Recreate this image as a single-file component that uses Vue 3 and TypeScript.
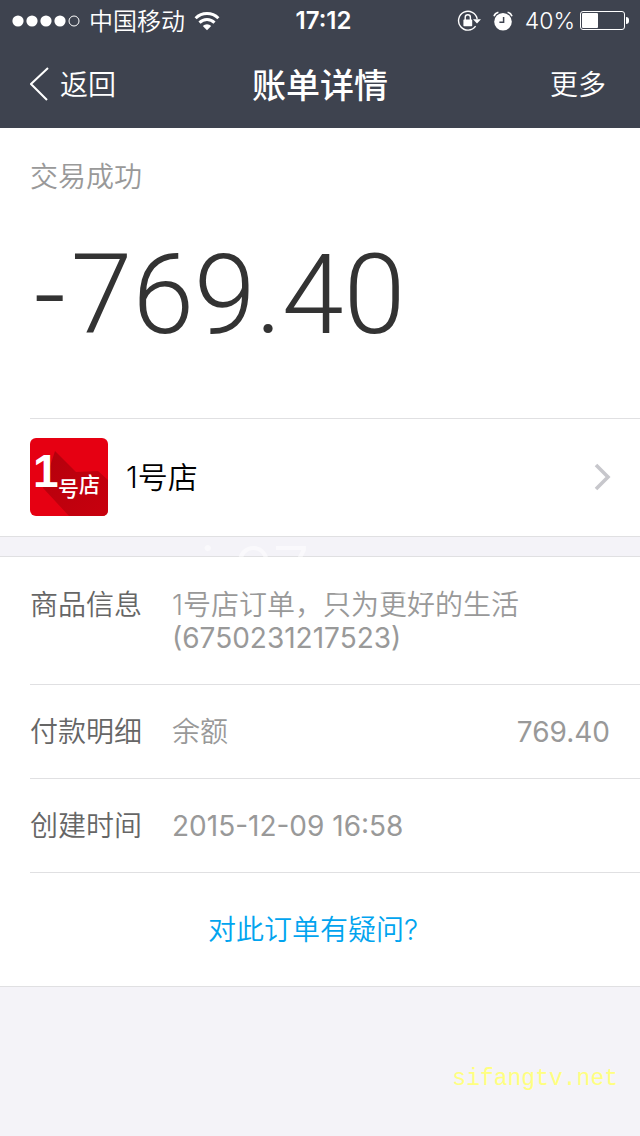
<script setup lang="ts">
interface Line {
  text: string
  numeric?: boolean
}

interface Detail {
  label: string
  lines: Line[]
  amount?: string
}

const batteryLevel = 40

const details: Detail[] = [
  {
    label: '商品信息',
    lines: [{ text: '1号店订单，只为更好的生活' }, { text: '(6750231217523)', numeric: true }],
  },
  { label: '付款明细', lines: [{ text: '余额' }], amount: '769.40' },
  { label: '创建时间', lines: [{ text: '2015-12-09 16:58', numeric: true }] },
]
</script>

<template>
  <div class="screen">
    <header class="top">
      <div class="status">
        <div class="status-side">
          <svg class="signal" width="68" height="12" viewBox="0 0 68 12" aria-hidden="true">
            <circle cx="6" cy="6" r="5.6" fill="#fff" />
            <circle cx="20" cy="6" r="5.6" fill="#fff" />
            <circle cx="34" cy="6" r="5.6" fill="#fff" />
            <circle cx="48" cy="6" r="5.6" fill="#fff" />
            <circle cx="62" cy="6" r="5" fill="none" stroke="#fff" />
          </svg>
          <span class="carrier">中国移动</span>
          <svg width="26" height="20" viewBox="0 0 26 20" aria-hidden="true">
            <g fill="none" stroke="#fff" stroke-width="3">
              <path d="M1.6 7.2A16.3 16.3 0 0 1 24.4 7.2" />
              <path d="M5.5 11.6A10.6 10.6 0 0 1 20.5 11.6" />
            </g>
            <path d="M8.8 15A6 6 0 0 1 17.2 15L13 19.2Z" fill="#fff" />
          </svg>
        </div>
        <span class="clock">17:12</span>
        <div class="status-side right">
          <svg class="lock" width="24" height="22" viewBox="0 0 24 22" aria-hidden="true">
            <path d="M18.6 16.2A9.4 9.4 0 1 1 20.2 9" fill="none" stroke="#fff" stroke-width="1.4" />
            <path d="M16 9.2H24L20 13.6Z" fill="#fff" />
            <rect x="6.4" y="9.4" width="8.8" height="6.8" rx="0.6" fill="#fff" />
            <path d="M8.2 10V7.4a2.6 2.6 0 0 1 5.2 0V10" fill="none" stroke="#fff" stroke-width="1.4" />
          </svg>
          <svg class="alarm" width="20" height="20" viewBox="0 0 20 20" aria-hidden="true">
            <circle cx="10" cy="10.8" r="8.8" fill="#fff" />
            <path d="M10.6 6V11.2H6.4" fill="none" stroke="#3e434f" stroke-width="1.5" />
            <path d="M1 5.2Q2 2.2 5.4 1.3M19 5.2Q18 2.2 14.6 1.3" fill="none" stroke="#fff" stroke-width="1.6" />
          </svg>
          <span class="percent">{{ batteryLevel }}%</span>
          <span class="battery"><span class="charge" :style="{ width: batteryLevel + '%' }"></span></span>
          <span class="battery-tip"></span>
        </div>
      </div>
      <nav class="nav">
        <button class="nav-btn" type="button">
          <svg width="20" height="34" viewBox="0 0 20 34" aria-hidden="true">
            <path d="M18 1L1 17L17 33" fill="none" stroke="#fff" stroke-width="2" />
          </svg>
          <span>返回</span>
        </button>
        <h1 class="title">账单详情</h1>
        <button class="nav-btn more" type="button"><span>更多</span></button>
      </nav>
    </header>

    <main>
      <section class="card first">
        <div class="summary">
          <p class="state">交易成功</p>
          <p class="amount"><span class="minus">-</span>769.40</p>
        </div>
        <a class="merchant" href="#">
          <svg class="logo" width="78" height="78" viewBox="0 0 78 78" aria-hidden="true">
            <defs>
              <linearGradient id="shade" x1="0" y1="0" x2="1" y2="1">
                <stop offset="0" stop-color="#b4000c" />
                <stop offset="1" stop-color="#c8000e" />
              </linearGradient>
            </defs>
            <rect width="78" height="78" rx="6" fill="#e60012" />
            <path d="M25 13L46 34L68 33L78 42V72Q78 78 72 78H39L13 50Z" fill="url(#shade)" />
            <g fill="#fff">
              <text class="logo-digit" x="3" y="49" font-size="46">1</text>
              <text class="logo-text" x="28" y="58" font-size="21">号</text>
              <text class="logo-text" x="49" y="54" font-size="21">店</text>
            </g>
          </svg>
          <span class="merchant-name">1号店</span>
          <svg width="18" height="28" viewBox="0 0 18 28" aria-hidden="true">
            <path d="M3 2L15 14L3 26" fill="none" stroke="#c7c7cc" stroke-width="3.6" />
          </svg>
        </a>
      </section>

      <section class="card">
        <dl class="details">
          <div v-for="item in details" :key="item.label" class="row">
            <dt>{{ item.label }}</dt>
            <dd class="value">
              <span v-for="line in item.lines" :key="line.text" class="line" :class="{ numeric: line.numeric }">{{ line.text }}</span>
            </dd>
            <dd v-if="item.amount" class="numeric">{{ item.amount }}</dd>
          </div>
        </dl>
        <a class="question" href="#">对此订单有疑问?</a>
        <span class="ghost" aria-hidden="true">i   97.com</span>
      </section>
    </main>

    <span class="site">sifangtv.net</span>
  </div>
</template>

<style>
body {
  margin: 0;
  background: #f4f3f8;
}
</style>

<style scoped>
.screen {
  position: relative;
  min-height: 100vh;
  background: #f4f3f8;
  font-family: Inter, "Noto Sans CJK SC", sans-serif;
  font-size: 28px;
  font-weight: 350;
  line-height: 33px;
  color: #666;
}
.top {
  background: #3e434f;
  color: #fff;
}
.status {
  display: grid;
  grid-template-columns: 1fr auto 1fr;
  align-items: center;
  height: 40px;
  padding: 1px 11px 0 12px;
  box-sizing: border-box;
  font-size: 24px;
}
.status-side {
  display: flex;
  align-items: center;
}
.right {
  justify-content: flex-end;
}
.carrier {
  margin: 0 9px;
  padding-top: 2px;
}
.clock {
  padding-left: 6px;
  font-weight: 600;
}
.lock {
  margin-right: 12px;
}
.alarm {
  margin-right: 12px;
}
.percent {
  margin-right: 5px;
  padding-top: 2px;
  font-size: 23px;
}
.battery {
  box-sizing: border-box;
  width: 45px;
  height: 19px;
  padding: 1px;
  border: 1px solid #fff;
  border-radius: 3px;
}
.charge {
  display: block;
  height: 100%;
  border-radius: 1px;
  background: #fff;
}
.battery-tip {
  width: 3px;
  height: 7px;
  margin-left: 1px;
  border-radius: 0 3px 3px 0;
  background: #fff;
}
.nav {
  display: grid;
  grid-template-columns: 1fr auto 1fr;
  align-items: center;
  height: 88px;
  padding: 0 30px;
}
.nav-btn {
  display: flex;
  align-items: center;
  justify-self: start;
  gap: 10px;
  padding: 0;
  border: 0;
  background: none;
  color: inherit;
  font: inherit;
}
.nav-btn span {
  padding-top: 3px;
}
.more {
  justify-self: end;
  margin-right: 4px;
}
.title {
  margin: 0;
  padding-top: 2px;
  font-size: 34px;
  font-weight: 500;
}
.card {
  position: relative;
  border-top: 1px solid #e0e0e2;
  border-bottom: 1px solid #e0e0e2;
  background: #fff;
}
.first {
  margin-bottom: 19px;
  border-top: 0;
}
.summary {
  margin-left: 30px;
  padding: 33px 0 57px;
  border-bottom: 1px solid #e0e0e2;
}
.state {
  margin: 0;
  color: #999;
}
.amount {
  margin: 35px 0 0 4px;
  font-family: Roboto, "Liberation Sans", sans-serif;
  font-size: 111px;
  font-weight: 300;
  line-height: 132px;
  color: #333;
}
.minus {
  margin-right: 5px;
}
.merchant {
  display: flex;
  align-items: center;
  padding: 19px 29px 20px 30px;
  color: #000;
  text-decoration: none;
}
.logo {
  margin-right: 18px;
}
.logo-digit {
  font-family: "Liberation Sans", sans-serif;
  font-weight: 700;
}
.logo-text {
  font-family: "Noto Sans CJK SC", sans-serif;
  font-weight: 500;
}
.merchant-name {
  flex: 1;
  font-size: 30px;
}
.details {
  margin: 0;
  padding-top: 1px;
}
.row {
  display: flex;
  margin-left: 30px;
  padding: 31px 30px 29px 0;
  border-bottom: 1px solid #e0e0e2;
}
dt {
  width: 142px;
}
dd {
  margin: 0;
  color: #999;
}
.value {
  flex: 1;
}
.line {
  display: block;
}
.numeric {
  font-weight: 400;
}
.question {
  display: block;
  padding: 41px 14px 39px 0;
  color: #01a4ef;
  text-align: center;
  text-decoration: none;
}
.ghost {
  position: absolute;
  top: -9px;
  left: 200px;
  font-size: 66px;
  font-weight: 300;
  line-height: 44px;
  white-space: pre;
  color: rgba(255, 255, 255, 0.5);
  pointer-events: none;
}
.site {
  position: absolute;
  right: 22px;
  bottom: 40px;
  font-family: "Liberation Mono", monospace;
  font-size: 23px;
  font-weight: 400;
  color: #ffff80;
}
</style>
